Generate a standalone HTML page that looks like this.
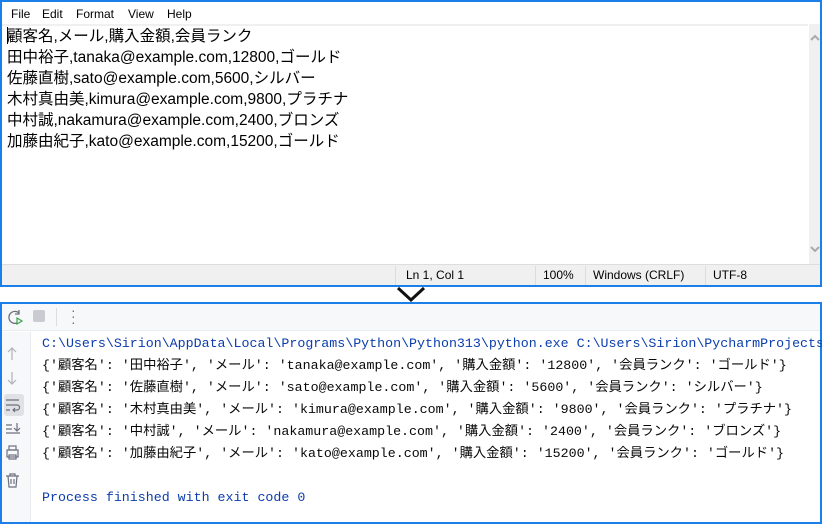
<!DOCTYPE html>
<html><head><meta charset="utf-8"><style>
*{margin:0;padding:0;box-sizing:border-box}
body{width:822px;height:524px;background:#fff;position:relative;overflow:hidden;font-family:"Segoe UI","Liberation Sans","Noto Sans CJK JP",sans-serif}
.np{position:absolute;left:0;top:0;width:822px;height:287px;border:2px solid #1a7fe8;background:#fff}
.menu{position:absolute;left:0;top:0;width:818px;height:21px;font-size:12px;color:#000}
.menu span{position:absolute;top:5px}
.edit{position:absolute;left:0;top:22px;width:806px;height:240px;border-top:2px solid #f0f0f0;font-family:"Liberation Sans","Noto Sans CJK JP",sans-serif;font-size:15.5px;line-height:21px;padding:0 0 0 5px;color:#000;white-space:pre}
.sb{position:absolute;left:807px;top:22px;width:11px;height:240px;background:#f0f0f0}
.status{position:absolute;left:0;top:262px;width:818px;height:21px;background:#f0f0f0;border-top:1px solid #ddd;font-size:12px}
.status span{position:absolute;top:3px}
.status i{position:absolute;top:1px;width:1px;height:19px;background:#ddd}
.arrow{position:absolute;left:396px;top:286px}
.con{position:absolute;left:0;top:302px;width:822px;height:222px;border:2px solid #1a7fe8;background:#fff}
.tb{position:absolute;left:0;top:0;width:818px;height:27px;background:#f7f8fa;border-bottom:1px solid #ebecf0}
.gut{position:absolute;left:0;top:28px;width:29px;height:190px;background:#f7f8fa;border-right:1px solid #ebecf0}
.out{position:absolute;left:40px;top:29px;font-family:"Liberation Mono","Noto Sans CJK JP",monospace;font-size:13.3px;line-height:22px;color:#080808;white-space:pre}
.blue{color:#0b3dad}
</style></head><body>
<div class="np">
<div class="menu"><span style="left:9px">File</span><span style="left:40px">Edit</span><span style="left:74px">Format</span><span style="left:126px">View</span><span style="left:165px">Help</span></div>
<div class="edit">顧客名,メール,購入金額,会員ランク
田中裕子,tanaka@example.com,12800,ゴールド
佐藤直樹,sato@example.com,5600,シルバー
木村真由美,kimura@example.com,9800,プラチナ
中村誠,nakamura@example.com,2400,ブロンズ
加藤由紀子,kato@example.com,15200,ゴールド</div>
<div class="edit" style="border:none;top:25px;left:5px;width:1px;height:17px;background:#000;padding:0"></div>
<div class="sb"><svg width="11" height="10" style="position:absolute;top:9px;left:1px"><path d="M1 7L5 3L9 7" stroke="#aaa" stroke-width="2" fill="none"/></svg><svg width="11" height="10" style="position:absolute;top:220px;left:1px"><path d="M1 3L5 7L9 3" stroke="#aaa" stroke-width="2" fill="none"/></svg></div>
<div class="status"><i style="left:393px"></i><span style="left:404px">Ln 1, Col 1</span><i style="left:533px"></i><span style="left:541px">100%</span><i style="left:583px"></i><span style="left:591px">Windows (CRLF)</span><i style="left:703px"></i><span style="left:711px">UTF-8</span></div>
</div>
<svg class="arrow" width="30" height="16"><path d="M2 2L15 14L28 2" stroke="#111" stroke-width="3" fill="none"/></svg>
<div class="con">
<div class="tb">
<svg width="20" height="20" style="position:absolute;left:3px;top:4px"><path d="M14 5A6 6 0 1 0 12 15" stroke="#6c707e" stroke-width="1.3" fill="none"/><path d="M14 2V6H10" stroke="#6c707e" stroke-width="1.3" fill="none"/><path d="M12 10L17 13L12 16Z" stroke="#3fa34d" stroke-width="1.2" fill="none"/></svg>
<div style="position:absolute;left:31px;top:6px;width:12px;height:12px;background:#c9cbd1;border-radius:2px"></div>
<div style="position:absolute;left:54px;top:4px;width:1px;height:18px;background:#ddd"></div>
<div style="position:absolute;left:69px;top:3px;font-size:14px;color:#6c707e;line-height:6px">·<br>·<br>·</div>
</div>
<div class="gut">
<svg width="29" height="190"><g stroke="#b0b3ba" stroke-width="1.2" fill="none"><path d="M10 28L10 16M6 20L10 16L14 20"/><path d="M10 40L10 52M6 48L10 52L14 48"/></g>
<rect x="2" y="62" width="20" height="22" rx="3" fill="#dfe1e5"/>
<g stroke="#6c707e" stroke-width="1.2" fill="none"><path d="M4 68H17M4 73H15A2 2 0 0 1 15 78H11M4 78H8M13 76L11 78L13 80"/>
<path d="M4 93H10M4 97H10M4 101H18M15 91V99M12 96L15 99L18 96"/>
<rect x="5" y="118" width="11" height="7"/><rect x="7" y="114" width="7" height="4"/><rect x="7" y="123" width="7" height="4"/>
<path d="M4 144H17M8 144V142H13V144M6 144L7 155H14L15 144M9 147V152M12 147V152"/></g></svg>
</div>
<div class="out"><span class="blue">C:\Users\Sirion\AppData\Local\Programs\Python\Python313\python.exe C:\Users\Sirion\PycharmProjects</span>
{'顧客名': '田中裕子', 'メール': 'tanaka@example.com', '購入金額': '12800', '会員ランク': 'ゴールド'}
{'顧客名': '佐藤直樹', 'メール': 'sato@example.com', '購入金額': '5600', '会員ランク': 'シルバー'}
{'顧客名': '木村真由美', 'メール': 'kimura@example.com', '購入金額': '9800', '会員ランク': 'プラチナ'}
{'顧客名': '中村誠', 'メール': 'nakamura@example.com', '購入金額': '2400', '会員ランク': 'ブロンズ'}
{'顧客名': '加藤由紀子', 'メール': 'kato@example.com', '購入金額': '15200', '会員ランク': 'ゴールド'}

<span class="blue">Process finished with exit code 0</span></div>
</div>
</body></html>
